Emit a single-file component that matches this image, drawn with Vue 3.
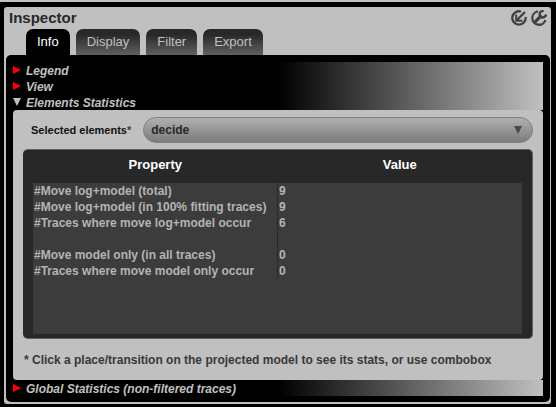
<script setup>
import { ref } from 'vue'

const tabs = ['Info', 'Display', 'Filter', 'Export']
const activeTab = ref('Info')
const selected = ref('decide')

const rows = [
  { property: '#Move log+model (total)', value: '9' },
  { property: '#Move log+model (in 100% fitting traces)', value: '9' },
  { property: '#Traces where move log+model occur', value: '6' },
  { property: '', value: '' },
  { property: '#Move model only (in all traces)', value: '0' },
  { property: '#Traces where move model only occur', value: '0' },
]
</script>

<template>
  <div class="frame">
    <main class="window">
      <header class="titlebar">
        <h1>Inspector</h1>
        <div class="tools">
          <button type="button" class="tool" aria-label="Minimize">
            <svg viewBox="0 0 16 16" width="16" height="16" fill="none" stroke="#404040">
              <path d="M10 1.6A6.7 6.7 0 1 0 14.6 7" stroke-width="2.3" />
              <path d="M14 2L6 10" stroke-width="2.3" />
              <path d="M5.2 4.5V10.8H11.5" stroke-width="2" />
            </svg>
          </button>
          <button type="button" class="tool" aria-label="Settings">
            <svg viewBox="0 0 16 16" width="16" height="16" fill="none" stroke="#404040">
              <path d="M7 1.4A6.7 6.7 0 1 0 14.4 10" stroke-width="2.3" />
              <path d="M4.6 11.4L9.6 6.4" stroke-width="3.2" stroke-linecap="round" />
              <path d="M12.6 1.2A3.2 3.2 0 1 0 15 4.4" stroke-width="2.4" />
            </svg>
          </button>
        </div>
      </header>

      <nav class="tabs" role="tablist">
        <button
          v-for="tab in tabs"
          :key="tab"
          type="button"
          role="tab"
          class="tab"
          :class="{ active: tab === activeTab }"
          :aria-selected="tab === activeTab"
          @click="activeTab = tab"
        >{{ tab }}</button>
      </nav>

      <section class="body">
        <button type="button" class="section-head">
          <svg class="marker" viewBox="0 0 8 8" width="8" height="8"><path d="M0 0L8 4L0 8Z" fill="#f00" /></svg>
          <span>Legend</span>
        </button>
        <button type="button" class="section-head">
          <svg class="marker" viewBox="0 0 8 8" width="8" height="8"><path d="M0 0L8 4L0 8Z" fill="#f00" /></svg>
          <span>View</span>
        </button>
        <button type="button" class="section-head" aria-expanded="true">
          <svg class="marker" viewBox="0 0 8 8" width="8" height="8"><path d="M0 0H8L4 8Z" fill="#c0c0c0" /></svg>
          <span>Elements Statistics</span>
        </button>

        <div class="content">
          <div class="field">
            <label for="element">Selected elements<span class="star">*</span></label>
            <div class="combo">
              <select id="element" v-model="selected">
                <option>decide</option>
              </select>
              <svg class="arrow" viewBox="0 0 8 8" width="8" height="8"><path d="M0 0H8L4 8Z" fill="#484848" /></svg>
            </div>
          </div>

          <div class="table-box">
            <div class="table-area">
              <table>
                <thead>
                  <tr><th>Property</th><th>Value</th></tr>
                </thead>
                <tbody>
                  <tr v-for="(row, i) in rows" :key="i">
                    <td>{{ row.property }}</td>
                    <td>{{ row.value }}</td>
                  </tr>
                </tbody>
              </table>
            </div>
          </div>

          <p class="note">* Click a place/transition on the projected model to see its stats, or use combobox</p>
        </div>

        <button type="button" class="section-head">
          <svg class="marker" viewBox="0 0 8 8" width="8" height="8"><path d="M0 0L8 4L0 8Z" fill="#f00" /></svg>
          <span>Global Statistics (non-filtered traces)</span>
        </button>
      </section>
    </main>
  </div>
</template>

<style>
body {
  background: #000;
}
</style>

<style scoped>
.frame,
.frame * {
  box-sizing: border-box;
}

.frame {
  display: flex;
  min-height: 100vh;
  padding: 5px 5px 3px 4px;
  border-top: 2px solid #c0c0c0;
  background: #000;
  font-family: "Liberation Sans", Arial, sans-serif;
  font-size: 12px;
  line-height: 16px;
}

button,
select {
  margin: 0;
  border: 0;
  font: inherit;
  cursor: pointer;
}

.window {
  display: flex;
  flex: 1;
  flex-direction: column;
  min-width: 0;
  padding: 0 1px 2px 2px;
  border-radius: 3px;
  background: #c0c0c0;
}

.titlebar {
  display: flex;
  justify-content: space-between;
  height: 22px;
  padding: 3px 3px 0;
}

h1 {
  margin: 0;
  color: #282828;
  font-size: 15px;
  line-height: 16px;
}

.tools {
  display: flex;
  gap: 4px;
}

.tool {
  display: flex;
  width: 16px;
  height: 16px;
  padding: 0;
  background: none;
}

.tabs {
  display: flex;
  gap: 6px;
  padding-left: 20px;
}

.tab {
  height: 26px;
  padding: 0 11px;
  border-radius: 7px 7px 0 0;
  background: linear-gradient(#282828 20%, #606060);
  color: #c0c0c0;
  font-size: 13px;
}

.tab.active {
  background: #000;
  color: #fff;
}

.body {
  display: flex;
  flex: 1;
  flex-direction: column;
  padding: 7px 7px 6px;
  border-radius: 5px;
  background: #000;
}

.section-head {
  display: flex;
  flex: none;
  align-items: center;
  gap: 5px;
  height: 16px;
  padding: 0;
  background: linear-gradient(90deg, #000 50%, #c0c0c0);
  color: #c0c0c0;
  font-weight: bold;
  font-style: italic;
  text-align: left;
}

.section-head span {
  padding-top: 2px;
}

.content {
  display: flex;
  flex: 1;
  flex-direction: column;
  padding: 7px 10px 12px;
  border-radius: 4px;
  background: #c0c0c0;
}

.field {
  display: flex;
  align-items: center;
  gap: 12px;
  padding-left: 8px;
}

label {
  color: #101010;
  font-size: 11px;
  font-weight: bold;
}

.star {
  color: #28405c;
}

.combo {
  position: relative;
  flex: 1;
}

select {
  display: block;
  width: 100%;
  height: 26px;
  padding: 0 24px 0 7px;
  border: 1px solid #808080;
  border-radius: 13px;
  appearance: none;
  background: linear-gradient(#b0b0b0, #7c7c7c);
  color: #282828;
  font-weight: bold;
}

.arrow {
  position: absolute;
  top: 9px;
  right: 11px;
  pointer-events: none;
}

.table-box {
  display: flex;
  flex: 1;
  margin-top: 6px;
  padding: 0 10px 4px;
  border: 1px solid #606060;
  border-width: 1px 1px 1px 0;
  border-radius: 5px;
  background: #282828;
}

.table-area {
  flex: 1;
  background: #3c3c3c;
}

table {
  width: 100%;
  border-collapse: collapse;
  table-layout: fixed;
}

th {
  height: 33px;
  padding: 0 0 4px;
  background: #282828;
  color: #fff;
  font-size: 13px;
}

td {
  height: 16px;
  padding: 0 1px;
  color: #b4b4b4;
  font-weight: bold;
}

td:first-child {
  border-right: 1px solid #282828;
}

.note {
  margin: 0;
  padding: 13px 1px 0;
  color: #383838;
  font-weight: bold;
}
</style>
